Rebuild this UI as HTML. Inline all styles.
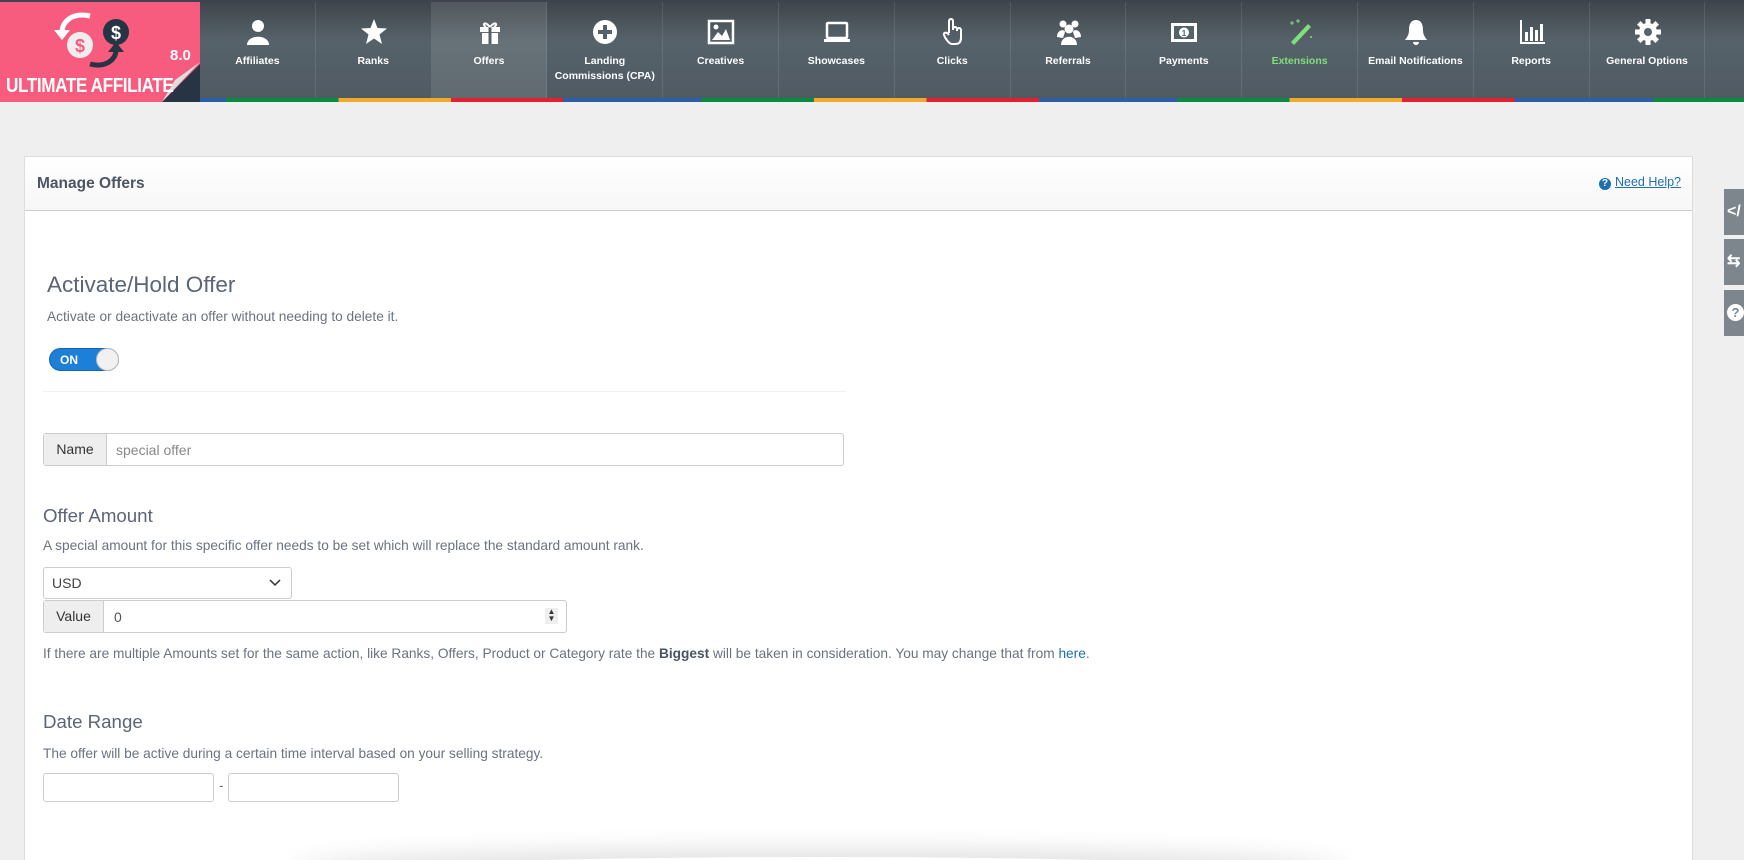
<!DOCTYPE html>
<html style="width:1744px;height:860px;overflow:hidden"><head><meta charset="utf-8"><style>
*{box-sizing:border-box;margin:0;padding:0}
body{width:1744px;height:860px;overflow:hidden;background:#efefef;font-family:"Liberation Sans",Arial,sans-serif;position:relative}
.top{position:absolute;left:0;top:0;width:1744px;height:100px;background:linear-gradient(#3f464b,#56626a 40%,#4f5a61);border-top:2px solid #3d4450}
.logo{position:absolute;left:0;top:0;width:200px;height:100px;background:#f75b7d;overflow:hidden}
.logo .ttl{position:absolute;left:6px;top:73px;color:#fff;font-weight:bold;font-size:20px;white-space:nowrap;letter-spacing:-0.5px;transform:scaleX(.86);transform-origin:left}
.logo .ver{position:absolute;left:170px;top:45px;color:#fff;font-weight:bold;font-size:15px}
.tab{position:absolute;top:0;width:115.8px;height:96px;border-right:1px solid rgba(255,255,255,.1);color:#fff;font-size:10.5px;font-weight:bold;text-align:center}
.tab svg{position:absolute;left:44px;top:16px;width:28px;height:28px}
.tab span{position:absolute;left:0;right:0;top:52px;line-height:15px}
.bar{position:absolute;left:200px;top:96px;width:1544px;height:4px;background:repeating-linear-gradient(90deg,#2f5ea8 0 26px,#0b8a42 26px 138.4px,#f0aa2c 138.4px 250.8px,#e2202f 250.8px 363.2px,#2f5ea8 363.2px 475.6px)}
.panel{position:absolute;left:24px;top:156px;width:1669px;height:720px;background:#fff;border:1px solid #ddd;overflow:hidden}
.ph{height:54px;border-bottom:1px solid #ccc;background:linear-gradient(#fff,#f7f7f7);position:relative}
.ph h3{position:absolute;left:12px;top:18px;font-size:15.5px;color:#4b5563;font-weight:bold}
.help{position:absolute;right:11px;top:18px;font-size:12.5px;color:#1f6fb2;text-decoration:underline}
.help i{display:inline-block;width:12px;height:12px;border-radius:50%;background:#1f6fb2;color:#fff;font-style:normal;font-size:10px;text-align:center;line-height:12px;font-weight:bold;text-decoration:none;margin-right:4px;vertical-align:0}
.a{position:absolute;color:#6b7280;font-size:13.7px}
.h{position:absolute;color:#5b6577;font-size:22.5px}
.h2{position:absolute;color:#5b6577;font-size:18.7px}
.inp{position:absolute;border:1px solid #ccc;border-radius:3px;background:#fff;font-size:14px;color:#777}
.addon{position:absolute;left:0;top:0;bottom:0;background:#eee;border-right:1px solid #ccc;color:#333;text-align:center}
.side{position:absolute;left:1724px;width:20px;height:46px;background:#7d868c;color:#fff;font-weight:bold;font-size:16px;padding-left:3px}
</style></head><body>
<div class="top">
<div class="logo">
<svg width="200" height="100" style="position:absolute;left:0;top:0">
<path d="M90 14 C72 10 62 20 62 30" stroke="#fff" stroke-width="5" fill="none"/><path d="M54 28 L62 38 L70 28Z" fill="#fff"/>
<circle cx="80" cy="43" r="13" fill="#eee"/><text x="80" y="50" fill="#f75b7d" font-size="18" font-weight="bold" text-anchor="middle" font-family="Liberation Sans">$</text>
<circle cx="116" cy="30" r="13" fill="#263443"/><text x="116" y="37" fill="#fff" font-size="18" font-weight="bold" text-anchor="middle" font-family="Liberation Sans">$</text>
<path d="M90 62 C105 66 116 58 116 48" stroke="#263443" stroke-width="5" fill="none"/><path d="M108 50 L116 40 L124 50Z" fill="#263443"/>
<path d="M200 62 L200 100 L162 100 Z" fill="#263443"/><path d="M200 60 L162 100 L175 78 Z" fill="#ddd"/>
</svg>
<div class="ver">8.0</div><div class="ttl">ULTIMATE AFFILIATE</div>
</div>
<div class="tab" style="left:200px"><svg viewBox="0 0 28 28"><circle cx="14" cy="8" r="6" fill="#fff"/><path d="M3 27 C3 16 25 16 25 27Z" fill="#fff"/></svg><span>Affiliates</span></div>
<div class="tab" style="left:315.8px"><svg viewBox="0 0 28 28"><path d="M14 1 L17.5 10 L27 10.5 L19.5 16.5 L22 26 L14 20.5 L6 26 L8.5 16.5 L1 10.5 L10.5 10Z" fill="#fff"/></svg><span>Ranks</span></div>
<div class="tab" style="left:431.6px;background:rgba(255,255,255,.1)"><svg viewBox="0 0 28 28"><rect x="4" y="9" width="20" height="5" fill="#fff"/><rect x="6" y="15" width="16" height="11" fill="#fff"/><rect x="12.5" y="9" width="3" height="17" fill="#56626a"/><path d="M14 9 C8 2 6 7 10 9 M14 9 C20 2 22 7 18 9" stroke="#fff" stroke-width="2" fill="none"/></svg><span>Offers</span></div>
<div class="tab" style="left:547.4px"><svg viewBox="0 0 28 28"><circle cx="14" cy="14" r="12" fill="#fff"/><path d="M14 7 V21 M7 14 H21" stroke="#56626a" stroke-width="4"/></svg><span>Landing<br>Commissions (CPA)</span></div>
<div class="tab" style="left:663.2px"><svg viewBox="0 0 28 28"><rect x="2" y="3" width="24" height="22" fill="none" stroke="#fff" stroke-width="2.5"/><path d="M5 22 L11 14 L15 18 L19 11 L23 22Z" fill="#fff"/><circle cx="9" cy="9" r="2.5" fill="#fff"/></svg><span>Creatives</span></div>
<div class="tab" style="left:779px"><svg viewBox="0 0 28 28"><rect x="4" y="5" width="20" height="15" rx="1" fill="none" stroke="#fff" stroke-width="2.5"/><rect x="1" y="21" width="26" height="3" fill="#fff"/></svg><span>Showcases</span></div>
<div class="tab" style="left:894.8px"><svg viewBox="0 0 28 28"><path d="M10 15 V3 a2 2 0 0 1 4 0 V12 M14 11 a2 2 0 0 1 4 0 V13 M18 12 a2 2 0 0 1 4 0 V20 C22 24 20 26 16 26 H13 C10 26 6 20 5 17 C4 15 7 13 10 17" stroke="#fff" stroke-width="2" fill="none"/></svg><span>Clicks</span></div>
<div class="tab" style="left:1010.6px"><svg viewBox="0 0 28 28"><circle cx="8" cy="6" r="3.5" fill="#fff"/><circle cx="20" cy="6" r="3.5" fill="#fff"/><circle cx="14" cy="11" r="4.5" fill="#fff"/><path d="M2 19 C2 11 10 11 10 14 L8 20Z M26 19 C26 11 18 11 18 14 L20 20Z M6 27 C6 16 22 16 22 27Z" fill="#fff"/></svg><span>Referrals</span></div>
<div class="tab" style="left:1126.4px"><svg viewBox="0 0 28 28"><rect x="1" y="5" width="26" height="19" fill="#fff"/><rect x="4" y="8" width="20" height="13" fill="#56626a"/><circle cx="14" cy="14.5" r="5" fill="#fff"/><text x="14" y="18" font-size="8" text-anchor="middle" fill="#56626a" font-family="Liberation Sans" font-weight="bold">1</text></svg><span>Payments</span></div>
<div class="tab" style="left:1242.2px;color:#7ee07a"><svg viewBox="0 0 28 28"><path d="M22 6 L25 9 L8 27 L5 24Z" fill="#7ee07a"/><path d="M6 3 V7 M4 5 H8 M12 1 V5 M10 3 H14 M25 18 V20 M24 19 H26" stroke="#7ee07a" stroke-width="1"/></svg><span>Extensions</span></div>
<div class="tab" style="left:1358px"><svg viewBox="0 0 28 28"><path d="M14 2 C8 2 7 8 7 12 C7 18 4 20 3 22 H25 C24 20 21 18 21 12 C21 8 20 2 14 2Z" fill="#fff"/><path d="M11 24 a3 3 0 0 0 6 0" fill="#fff"/></svg><span>Email Notifications</span></div>
<div class="tab" style="left:1473.8px"><svg viewBox="0 0 28 28"><path d="M3 2 V25 H27" stroke="#fff" stroke-width="2" fill="none"/><rect x="7" y="14" width="3" height="9" fill="#fff"/><rect x="12" y="9" width="3" height="14" fill="#fff"/><rect x="17" y="12" width="3" height="11" fill="#fff"/><rect x="22" y="6" width="3" height="17" fill="#fff"/></svg><span>Reports</span></div>
<div class="tab" style="left:1589.6px"><svg viewBox="0 0 28 28"><g fill="#fff"><circle cx="14" cy="14" r="9"/><rect x="11.5" y="1" width="5" height="26"/><rect x="1" y="11.5" width="26" height="5"/><rect x="11.5" y="1" width="5" height="26" transform="rotate(45 14 14)"/><rect x="11.5" y="1" width="5" height="26" transform="rotate(-45 14 14)"/></g><circle cx="14" cy="14" r="4" fill="#56626a"/></svg><span>General Options</span></div>
<div class="bar"></div>
</div>

<div class="panel">
<div class="ph"><h3>Manage Offers</h3><div class="help"><i>?</i>Need Help?</div></div>
<div class="h" style="left:22px;top:115px">Activate/Hold Offer</div>
<div class="a" style="left:22px;top:152px">Activate or deactivate an offer without needing to delete it.</div>
<div style="position:absolute;left:24px;top:191px;width:70px;height:23px;border-radius:12px;background:#1e7fd8;border:1px solid #1565b5">
<span style="position:absolute;left:10px;top:4px;color:#fff;font-weight:bold;font-size:12px">ON</span>
<div style="position:absolute;right:-1px;top:-1px;width:23px;height:23px;border-radius:50%;background:#f1f1f1;border:1px solid #bbb"></div></div>
<div style="position:absolute;left:18px;top:234px;width:803px;border-top:1px solid #f0f0f0"></div>
<div class="inp" style="left:18px;top:276px;width:801px;height:33px"><div class="addon" style="width:63px;line-height:31px;font-size:14px">Name</div><span style="position:absolute;left:72px;top:8px;color:#888">special offer</span></div>
<div class="h2" style="left:18px;top:348px">Offer Amount</div>
<div class="a" style="left:18px;top:381px">A special amount for this specific offer needs to be set which will replace the standard amount rank.</div>
<div class="inp" style="left:18px;top:410px;width:249px;height:32px;color:#444"><span style="position:absolute;left:8px;top:7px">USD</span><svg style="position:absolute;right:10px;top:11px" width="12" height="8"><path d="M1 1 L6 6 L11 1" stroke="#333" stroke-width="1.5" fill="none"/></svg></div>
<div class="inp" style="left:18px;top:443px;width:524px;height:33px"><div class="addon" style="width:60px;line-height:31px;font-size:14px">Value</div><span style="position:absolute;left:70px;top:8px;color:#555">0</span><span style="position:absolute;right:8px;top:7px;width:13px;height:16px;background:#eee;font-size:8px;line-height:7px;text-align:center;color:#333">▲<br>▼</span></div>
<div class="a" style="left:18px;top:489px">If there are multiple Amounts set for the same action, like Ranks, Offers, Product or Category rate the <b style="color:#4b5563">Biggest</b> will be taken in consideration. You may change that from <span style="color:#1f6fb2">here</span>.</div>
<div class="h2" style="left:18px;top:554px">Date Range</div>
<div class="a" style="left:18px;top:589px">The offer will be active during a certain time interval based on your selling strategy.</div>
<div class="inp" style="left:18px;top:616px;width:171px;height:29px"></div>
<div class="a" style="left:194px;top:621px">-</div>
<div class="inp" style="left:203px;top:616px;width:171px;height:29px"></div>
<div style="position:absolute;left:270px;top:700px;width:1050px;height:40px;box-shadow:0 -8px 24px rgba(0,0,0,.12);border-radius:50%"></div>
</div>
<div class="side" style="top:189px;line-height:46px">&lt;/</div>
<div class="side" style="top:239px;line-height:46px">⇆</div>
<div class="side" style="top:290px;line-height:46px"><span style="display:inline-block;width:17px;height:17px;border-radius:50%;background:#fff;color:#7d868c;font-size:13px;line-height:17px;text-align:center">?</span></div>
</body></html>
